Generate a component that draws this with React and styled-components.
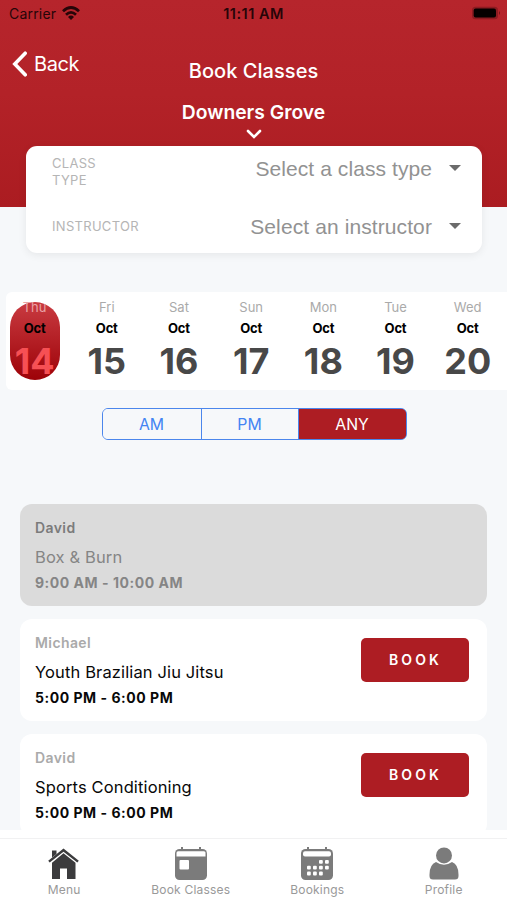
import React, { useState } from "react";
import styled, { createGlobalStyle } from "styled-components";

const GlobalStyle = createGlobalStyle`
  * {
    box-sizing: border-box;
  }
  body {
    margin: 0;
    background: #f6f8fa;
    font-family: Inter, Roboto, sans-serif;
  }
  button {
    font-family: inherit;
    border: none;
    padding: 0;
    background: none;
    cursor: pointer;
  }
`;

const days = [
  { day: "Thu", month: "Oct", date: 14 },
  { day: "Fri", month: "Oct", date: 15 },
  { day: "Sat", month: "Oct", date: 16 },
  { day: "Sun", month: "Oct", date: 17 },
  { day: "Mon", month: "Oct", date: 18 },
  { day: "Tue", month: "Oct", date: 19 },
  { day: "Wed", month: "Oct", date: 20 },
];

const classes = [
  { instructor: "David", name: "Box & Burn", time: "9:00 AM - 10:00 AM", past: true },
  { instructor: "Michael", name: "Youth Brazilian Jiu Jitsu", time: "5:00 PM - 6:00 PM" },
  { instructor: "David", name: "Sports Conditioning", time: "5:00 PM - 6:00 PM" },
];

const HomeIcon = () => (
  <svg width="32" height="32" viewBox="0 0 32 32" fill="#3b3b3d">
    <path d="M4 2.500h4.500v3.500L4 9.500z" />
    <path d="M15.500 .6 30.800 12.700 29.300 14.600 15.500 3.700 1.700 14.600 .2 12.700z" />
    <path d="M15.500 5.300 27.500 14.800V31H19V20.500h-7V31H4V14.800z" />
  </svg>
);

const ClassesIcon = () => (
  <svg width="34" height="33" viewBox="0 0 34 33">
    <path d="M8 0v4M26 0v4" stroke="#7b7b7b" strokeWidth="2" />
    <rect x="1" y="2" width="32" height="31" rx="4.500" fill="#7b7b7b" />
    <path d="M4 4.300h26q1.500 0 1.500 1.500V9.500h-29V5.800q0-1.500 1.500-1.500z" fill="#fff" />
    <rect x="5.500" y="13" width="9.500" height="9.500" rx="1" fill="#fff" />
  </svg>
);

const dots = [
  [19, 13], [25, 13],
  [7, 18.8], [13, 18.8], [19, 18.8], [25, 18.8],
  [7, 24.6], [13, 24.6], [19, 24.6],
];

const BookingsIcon = () => (
  <svg width="34" height="33" viewBox="0 0 34 33">
    <path d="M8 0v4M26 0v4" stroke="#7b7b7b" strokeWidth="2" />
    <rect x="1" y="2" width="32" height="31" rx="4.500" fill="#7b7b7b" />
    <path d="M5 4.300h24q2 0 2 2V7.500q0 2-2 2H5q-2 0-2-2V6.300q0-2 2-2z" fill="#fff" />
    {dots.map(([x, y]) => (
      <rect key={`${x}-${y}`} x={x} y={y} width="3.800" height="3.800" rx="1" fill="#fff" />
    ))}
  </svg>
);

const ProfileIcon = () => (
  <svg width="30" height="33" viewBox="0 0 30 33" fill="#7b7b7b">
    <circle cx="15" cy="8.400" r="8" />
    <path d="M7 15Q15 20.500 23 15 29.500 17.500 29.500 27.500V29Q29.500 32.500 26 32.500H4Q.5 32.500 .5 29V27.500Q.5 17.500 7 15z" />
  </svg>
);

const tabs = [
  { label: "Menu", icon: <HomeIcon /> },
  { label: "Book Classes", icon: <ClassesIcon /> },
  { label: "Bookings", icon: <BookingsIcon /> },
  { label: "Profile", icon: <ProfileIcon /> },
];

function App() {
  const [selected, setSelected] = useState(14);
  const [period, setPeriod] = useState("ANY");

  return (
    <>
      <GlobalStyle />
      <Screen>
        <Header>
          <StatusBar>
            <Carrier>
              Carrier
              <svg width="18" height="14" viewBox="0 0 18 14" fill="none" stroke="#270508" strokeWidth="2.800">
                <path d="M1 5.200Q9-2.200 17 5.200" />
                <path d="M4 8.700Q9 4.100 14 8.700" />
                <path d="M9 14 6 10.900Q9 8.300 12 10.900z" fill="#270508" stroke="none" />
              </svg>
            </Carrier>
            <Clock>11:11 AM</Clock>
            <Battery>
              <svg width="30" height="14" viewBox="0 0 30 14">
                <rect x="1" y=".8" width="26" height="12.400" rx="3.500" fill="#8c1b21" />
                <rect x="2.700" y="2.500" width="22.300" height="9" rx="2" fill="#050000" />
                <path d="M28 5q2 2 0 4z" fill="#741418" />
              </svg>
            </Battery>
          </StatusBar>
          <NavRow>
            <Back>
              <svg width="15" height="26" viewBox="0 0 15 26" fill="none" stroke="#fff" strokeWidth="3.600" strokeLinecap="round">
                <path d="M13.200 2.200 2.800 13 13.200 23.800" />
              </svg>
              Back
            </Back>
            <Title>Book Classes</Title>
          </NavRow>
          <Location>
            Downers Grove
            <svg width="16" height="10" viewBox="0 0 16 10" fill="none" stroke="#fff" strokeWidth="2.600" strokeLinecap="round">
              <path d="M2 2 8 8 14 2" />
            </svg>
          </Location>
        </Header>

        <Filters>
          <FilterRow>
            <FilterLabel>CLASS TYPE</FilterLabel>
            <FilterValue $spacing="0.08px">Select a class type</FilterValue>
            <Arrow />
          </FilterRow>
          <FilterRow>
            <FilterLabel $single>INSTRUCTOR</FilterLabel>
            <FilterValue $spacing="0.1px">Select an instructor</FilterValue>
            <Arrow />
          </FilterRow>
        </Filters>

        <DateStrip>
          {days.map((d) => (
            <Day key={d.date} $active={d.date === selected} onClick={() => setSelected(d.date)}>
              <Weekday>{d.day}</Weekday>
              <Month>{d.month}</Month>
              <DateNumber>{d.date}</DateNumber>
            </Day>
          ))}
        </DateStrip>

        <Segments>
          {["AM", "PM", "ANY"].map((p) => (
            <Segment key={p} $active={p === period} onClick={() => setPeriod(p)}>
              {p}
            </Segment>
          ))}
        </Segments>

        <ClassList>
          {classes.map((c, index) => (
            <ClassCard key={index} $past={c.past}>
              <div>
                <Instructor>{c.instructor}</Instructor>
                <ClassName>{c.name}</ClassName>
                <Time>{c.time}</Time>
              </div>
              {!c.past && <BookButton>BOOK</BookButton>}
            </ClassCard>
          ))}
        </ClassList>

        <TabBar>
          {tabs.map((t) => (
            <Tab key={t.label}>
              <TabIcon>{t.icon}</TabIcon>
              {t.label}
            </Tab>
          ))}
        </TabBar>
      </Screen>
    </>
  );
}

const Screen = styled.div`
  width: 507px;
  height: 900px;
  display: flex;
  flex-direction: column;
  overflow: hidden;
  background: #f6f8fa;
`;

const Header = styled.header`
  height: 207px;
  flex: none;
  background: linear-gradient(#b6252c, #b32228 45%, #ab1c21);
  color: #fff;
`;

const StatusBar = styled.div`
  height: 28px;
  display: grid;
  grid-template-columns: 1fr auto 1fr;
  align-items: center;
  padding: 0 6px 0 9px;
  color: #270508;
  font-size: 14px;
  line-height: 28px;
`;

const Carrier = styled.div`
  display: flex;
  align-items: center;
  gap: 6px;
  letter-spacing: 0.2px;

  svg {
    margin-top: -2px;
  }
`;

const Clock = styled.div`
  font-weight: 600;
  font-size: 14.500px;
  letter-spacing: 0.5px;
  margin-right: 3px;
`;

const Battery = styled.div`
  display: flex;
  justify-content: flex-end;
  margin-top: -2px;
`;

const NavRow = styled.div`
  height: 71px;
  display: grid;
  grid-template-columns: 1fr auto 1fr;
  padding: 0 12px;
`;

const Back = styled.button`
  display: flex;
  align-items: center;
  gap: 7px;
  height: 26px;
  margin-top: 23px;
  color: #fff;
  font-size: 20px;
  line-height: 26px;
  letter-spacing: -0.4px;
`;

const Title = styled.h1`
  margin: 30px 0 0;
  font-size: 20px;
  line-height: 26px;
  font-weight: 500;
  letter-spacing: 0.05px;
`;

const Location = styled.div`
  display: flex;
  flex-direction: column;
  align-items: center;
  font-size: 19.300px;
  font-weight: 600;
  line-height: 26px;

  svg {
    margin-top: 4px;
  }
`;

const Filters = styled.section`
  flex: none;
  width: 456px;
  height: 107px;
  margin: -61px 0 0 26px;
  padding: 9px 21px 0 26px;
  border-radius: 11px;
  background: #fff;
  box-shadow: 0 2px 9px rgba(0, 0, 0, 0.07);
  z-index: 1;
`;

const FilterRow = styled.div`
  display: flex;
  align-items: flex-start;
  height: 58px;
  line-height: 28px;
`;

const FilterLabel = styled.div`
  width: 95px;
  padding-top: ${(p) => (p.$single ? "5px" : "0")};
  color: #b5b5b5;
  font-size: 13px;
  line-height: 17px;
  letter-spacing: 0.3px;
  word-spacing: 40px;
`;

const FilterValue = styled.div`
  flex: 1;
  text-align: right;
  color: #929292;
  font-family: "Liberation Sans", Arial, sans-serif;
  font-size: 21px;
  letter-spacing: ${(p) => p.$spacing};
`;

const Arrow = styled.span`
  margin: 10px 0 0 17px;
  border: 6px solid transparent;
  border-top-color: #6b6b6b;
  border-bottom: none;
`;

const DateStrip = styled.section`
  flex: none;
  display: flex;
  gap: 22.2px;
  height: 98px;
  margin: 39px 0 0 6px;
  padding: 10px 0 0 3.600px;
  border-radius: 6px 0 0 6px;
  background: #fff;
`;

const Weekday = styled.span`
  font-size: 13px;
  line-height: 16px;
  color: #aaa;
`;

const Month = styled.span`
  margin-top: 5px;
  font-size: 13px;
  font-weight: 700;
  line-height: 16px;
  letter-spacing: -0.2px;
  color: #000;
`;

const DateNumber = styled.span`
  margin-top: 4px;
  font-size: 36px;
  font-weight: 700;
  line-height: 42px;
  color: #484848;
`;

const Day = styled.button`
  flex: none;
  width: 50px;
  height: 78px;
  display: flex;
  flex-direction: column;
  align-items: center;
  justify-content: flex-start;
  border-radius: 25px;
  background: ${(p) => (p.$active ? "linear-gradient(#c93b41, #9d0208)" : "none")};

  ${Weekday} {
    margin-top: -3px;
    color: ${(p) => (p.$active ? "#e9a3a6" : "#aaa")};
  }
  ${DateNumber} {
    color: ${(p) => (p.$active ? "#f65054" : "#484848")};
  }
`;

const Segments = styled.div`
  flex: none;
  display: grid;
  grid-template-columns: 99px 97px 1fr;
  width: 305px;
  height: 32px;
  margin: 18px 0 0 101.500px;
  border: 1.500px solid #4b86ec;
  border-radius: 6px;
  background: linear-gradient(90deg, transparent 70%, #ad1d23 70%);
  overflow: hidden;
`;

const Segment = styled.button`
  border-right: 1px solid #4b86ec;
  background: ${(p) => (p.$active ? "#ad1d23" : "#f6f8fa")};
  color: ${(p) => (p.$active ? "#fff" : "#4384f3")};
  font-size: 15.800px;

  &:last-child {
    border-right: none;
  }
`;

const ClassList = styled.section`
  flex: none;
  display: flex;
  flex-direction: column;
  gap: 13px;
  height: 326px;
  margin-top: 64px;
  padding: 0 20px;
  overflow: hidden;
`;

const Instructor = styled.div`
  color: #aaa;
  font-size: 14px;
  font-weight: 600;
  line-height: 20px;
  letter-spacing: 0.4px;
`;

const ClassName = styled.div`
  margin-top: 7px;
  font-size: 16.500px;
  line-height: 24px;
  letter-spacing: 0.13px;
`;

const Time = styled.div`
  margin-top: 4px;
  font-size: 14px;
  font-weight: 700;
  line-height: 20px;
  letter-spacing: 0.53px;
`;

const ClassCard = styled.article`
  flex: none;
  display: flex;
  justify-content: space-between;
  align-items: flex-start;
  height: 102px;
  padding: 14px 18px 0 15px;
  border-radius: 12px;
  background: ${(p) => (p.$past ? "#dbdbdb" : "#fff")};
  color: ${(p) => (p.$past ? "#858585" : "#080808")};

  ${Instructor} {
    color: ${(p) => (p.$past ? "#7b7b7b" : "#aaa")};
  }
`;

const BookButton = styled.button`
  width: 108px;
  height: 44px;
  margin-top: 5px;
  padding-bottom: 1px;
  border-radius: 5px;
  background: #ad1d23;
  color: #fff;
  font-size: 14px;
  font-weight: 600;
  letter-spacing: 3.100px;
  text-indent: 1px;
`;

const TabBar = styled.nav`
  flex: none;
  display: grid;
  grid-template-columns: repeat(4, 126.500px);
  height: 70px;
  padding-left: 1px;
  border-top: 8px solid #fff;
  background: #fff;
  box-shadow: inset 0 1px 0 #f1f1f2;
`;

const Tab = styled.button`
  display: flex;
  flex-direction: column;
  align-items: center;
  justify-content: flex-start;
  color: #999;
  font-size: 12px;
  line-height: 16px;
  letter-spacing: 0.2px;
`;

const TabIcon = styled.span`
  display: flex;
  align-items: flex-end;
  height: 42px;
  margin-bottom: 2px;
`;

export default App;
